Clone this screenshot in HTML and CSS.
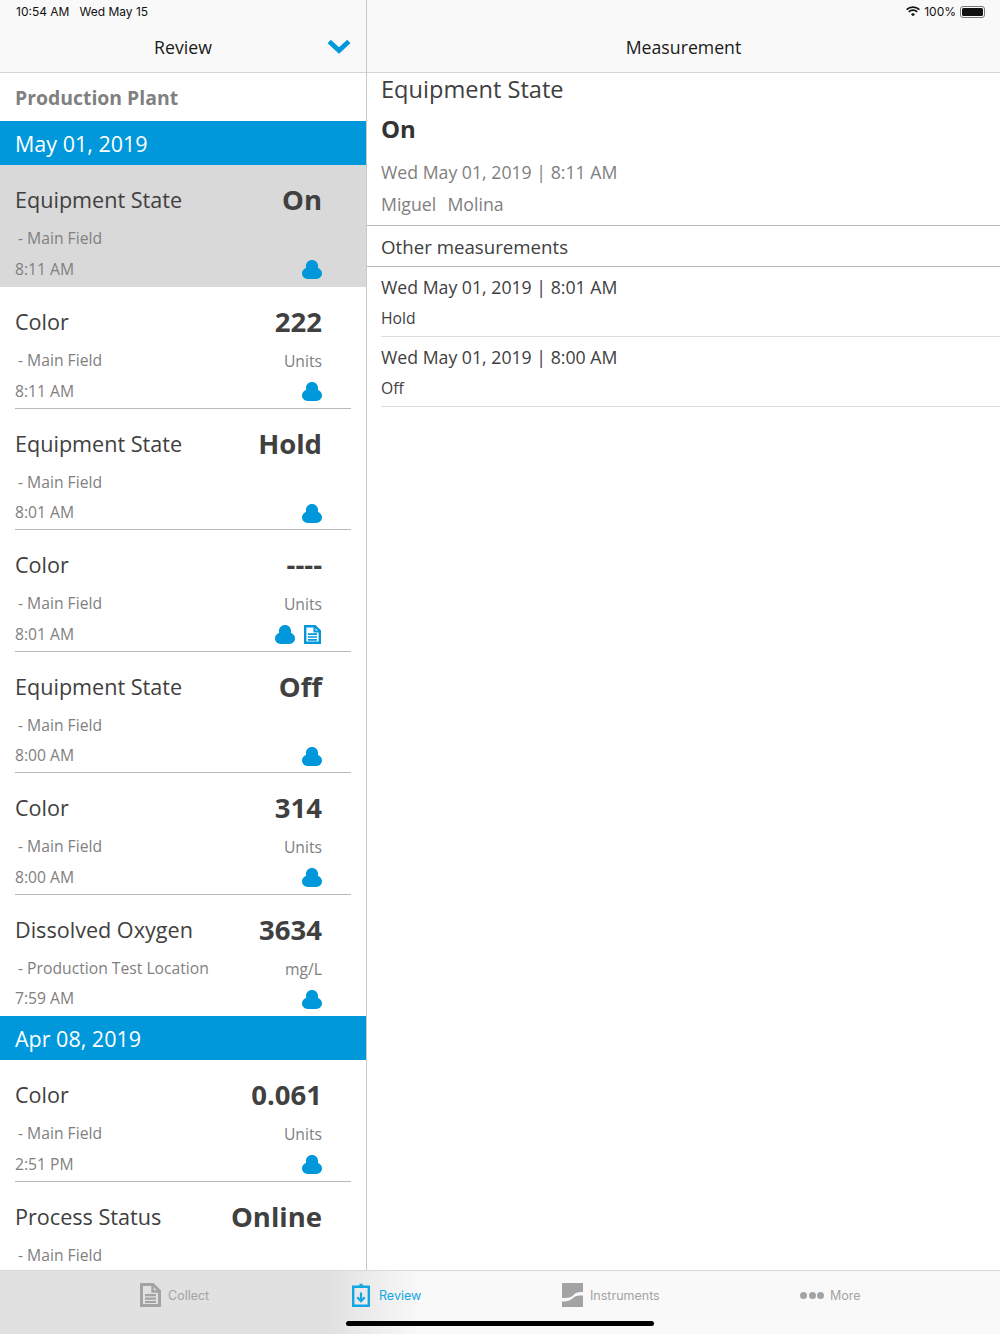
FILE: index.html
```html
<!DOCTYPE html>
<html lang="en">
<head>
<meta charset="utf-8">
<title>Review</title>
<link rel="stylesheet" href="styles.css">
</head>
<body>
<svg class="defs" width="0" height="0" aria-hidden="true">
  <symbol id="cloud" viewBox="0 0 20 19"><path d="M10 0c3.400 0 6.100 2.700 6.100 6.100 0 .7-.1 1.300-.3 1.700C18.300 8.700 20 10.800 20 13.300 20 16.500 17.500 19 14.300 19H5.700C2.500 19 0 16.500 0 13.300 0 10.800 1.700 8.700 4.200 7.800 4 7.400 3.900 6.800 3.900 6.100 3.900 2.700 6.600 0 10 0z"/></symbol>
  <symbol id="doc" viewBox="0 0 17 19"><path d="M1.200 1.200h9.800l4.800 4.800v11.800H1.200z" fill="none" stroke="currentColor" stroke-width="2.400"/><path d="M10.500 1v5.500H16" fill="none" stroke="currentColor" stroke-width="2"/><path d="M4 9.200h9M4 12h9M4 14.800h9" stroke="currentColor" stroke-width="1.700"/></symbol>
</svg>
<div class="app">
  <div class="panes">
    <section class="left">
      <header class="nav">
        <div class="status"><span>10:54 AM</span><span>Wed May 15</span></div>
        <div class="nav-title">Review
          <svg class="chevron" viewBox="0 0 24 15"><path d="M2.200 2.500 12 11.500 21.800 2.500" fill="none" stroke="#0098db" stroke-width="4.800"/></svg>
        </div>
      </header>
      <div class="list">
        <div class="plant">Production Plant</div>
        <div class="date">May 01, 2019</div>
        <article class="row selected">
          <div class="line1"><span class="name">Equipment State</span><span class="val">On</span></div>
          <div class="line2"><span class="loc">- Main Field</span></div>
          <div class="line3"><span class="time">8:11 AM</span><span class="icons"><svg class="cloud"><use href="#cloud"/></svg></span></div>
        </article>
        <article class="row">
          <div class="line1"><span class="name">Color</span><span class="val">222</span></div>
          <div class="line2"><span class="loc">- Main Field</span><span class="unit">Units</span></div>
          <div class="line3"><span class="time">8:11 AM</span><span class="icons"><svg class="cloud"><use href="#cloud"/></svg></span></div>
        </article>
        <article class="row">
          <div class="line1"><span class="name">Equipment State</span><span class="val">Hold</span></div>
          <div class="line2"><span class="loc">- Main Field</span></div>
          <div class="line3"><span class="time">8:01 AM</span><span class="icons"><svg class="cloud"><use href="#cloud"/></svg></span></div>
        </article>
        <article class="row">
          <div class="line1"><span class="name">Color</span><span class="val">----</span></div>
          <div class="line2"><span class="loc">- Main Field</span><span class="unit">Units</span></div>
          <div class="line3"><span class="time">8:01 AM</span><span class="icons"><svg class="cloud"><use href="#cloud"/></svg><svg class="doc"><use href="#doc"/></svg></span></div>
        </article>
        <article class="row">
          <div class="line1"><span class="name">Equipment State</span><span class="val">Off</span></div>
          <div class="line2"><span class="loc">- Main Field</span></div>
          <div class="line3"><span class="time">8:00 AM</span><span class="icons"><svg class="cloud"><use href="#cloud"/></svg></span></div>
        </article>
        <article class="row">
          <div class="line1"><span class="name">Color</span><span class="val">314</span></div>
          <div class="line2"><span class="loc">- Main Field</span><span class="unit">Units</span></div>
          <div class="line3"><span class="time">8:00 AM</span><span class="icons"><svg class="cloud"><use href="#cloud"/></svg></span></div>
        </article>
        <article class="row last">
          <div class="line1"><span class="name">Dissolved Oxygen</span><span class="val">3634</span></div>
          <div class="line2"><span class="loc">- Production Test Location</span><span class="unit">mg/L</span></div>
          <div class="line3"><span class="time">7:59 AM</span><span class="icons"><svg class="cloud"><use href="#cloud"/></svg></span></div>
        </article>
        <div class="date">Apr 08, 2019</div>
        <article class="row">
          <div class="line1"><span class="name">Color</span><span class="val">0.061</span></div>
          <div class="line2"><span class="loc">- Main Field</span><span class="unit">Units</span></div>
          <div class="line3"><span class="time">2:51 PM</span><span class="icons"><svg class="cloud"><use href="#cloud"/></svg></span></div>
        </article>
        <article class="row">
          <div class="line1"><span class="name">Process Status</span><span class="val">Online</span></div>
          <div class="line2"><span class="loc">- Main Field</span></div>
        </article>
      </div>
    </section>
    <section class="right">
      <header class="nav">
        <div class="status end">
          <svg class="wifi" viewBox="0 0 16 12"><path d="M8 11.500 5.700 9a3.300 3.300 0 0 1 4.600 0zM3.900 7.200 2.500 5.700a7.900 7.900 0 0 1 11 0l-1.400 1.500a5.900 5.900 0 0 0-8.200 0zM1.400 4.600 0 3.100a11.600 11.600 0 0 1 16 0l-1.400 1.500a9.600 9.600 0 0 0-13.200 0z"/></svg>
          <span>100%</span>
          <span class="battery"><span class="battery-fill"></span></span>
        </div>
        <div class="nav-title">Measurement</div>
      </header>
      <div class="detail">
        <h1 class="d-name">Equipment State</h1>
        <div class="d-val">On</div>
        <div class="d-meta">Wed May 01, 2019 | 8:11 AM</div>
        <div class="d-meta d-user">Miguel&nbsp; Molina</div>
      </div>
      <div class="other">Other measurements</div>
      <div class="m-item"><div class="m-date">Wed May 01, 2019 | 8:01 AM</div><div class="m-val">Hold</div></div>
      <div class="m-item"><div class="m-date">Wed May 01, 2019 | 8:00 AM</div><div class="m-val">Off</div></div>
    </section>
  </div>
  <footer class="tabs">
    <div class="tab t1">
      <svg class="t-icon" viewBox="0 0 21 24"><path d="M1.500 1.500h11.500l6.500 6.500v14.500H1.500z" fill="none" stroke="#a3a3a3" stroke-width="3"/><path d="M12.500 1.500v7h7" fill="none" stroke="#a3a3a3" stroke-width="2.400"/><path d="M5 12.200h11M5 15.600h11M5 19h11" stroke="#a3a3a3" stroke-width="2.200"/></svg>
      <span class="t-label">Collect</span>
    </div>
    <div class="tab t2 active">
      <svg class="t-icon" viewBox="0 0 18 24"><path d="M1.200 3.800h15.600v19H1.200z" fill="none" stroke="#14a5e3" stroke-width="2.400"/><path d="M5.500 5V2.800h2V.8h3v2h2V5z" fill="#14a5e3"/><path d="M9 9.500v8.500M5.200 14.300 9 18.200l3.800-3.900" fill="none" stroke="#14a5e3" stroke-width="2.200"/></svg>
      <span class="t-label">Review</span>
    </div>
    <div class="tab t3">
      <svg class="t-icon wide" viewBox="0 0 21 24"><path d="M0 0h21v9c-7 0-8 1.500-10 3.500S6 15 0 15zM0 18.500c7 0 8.500-1.500 11-3.500s4-2.500 10-2.500V24H0z" fill="#a3a3a3"/></svg>
      <span class="t-label">Instruments</span>
    </div>
    <div class="tab t4">
      <span class="dots"><i></i><i></i><i></i></span>
      <span class="t-label">More</span>
    </div>
    <div class="home"></div>
  </footer>
</div>
</body>
</html>
```
FILE: styles.css
```css
* { box-sizing: border-box; }
html, body { margin: 0; padding: 0; }
body { width: 1000px; height: 1334px; overflow: hidden; background: #fff; font-family: "Open Sans", "Noto Sans", sans-serif; color: #3c3c3c; }
.defs { position: absolute; }
.app { display: flex; flex-direction: column; height: 1334px; }
.panes { display: flex; height: 1270px; }
.left { width: 367px; border-right: 1px solid #c8c8c8; display: flex; flex-direction: column; overflow: hidden; flex: none; }
.right { flex: 1; min-width: 0; }
.nav { height: 73px; background: #f9f9f9; border-bottom: 1px solid #d4d4d4; display: flex; flex-direction: column; flex: none; }
.status { height: 24px; padding: 4px 0 0 16px; font: 12px/16px Inter, "Liberation Sans", sans-serif; color: #111; display: flex; gap: 10px; }
.status.end { justify-content: flex-end; padding: 4px 15px 0 0; gap: 4px; align-items: flex-start; }
.wifi { width: 14px; height: 11px; margin-top: 2px; fill: #111; }
.battery { width: 25px; height: 12px; margin-top: 2px; border: 1px solid #777; border-radius: 3px; padding: 1px; position: relative; display: block; }
.battery-fill { display: block; width: 100%; height: 100%; background: #111; border-radius: 1.500px; }
.nav-title { flex: 1; display: flex; align-items: center; justify-content: center; font-size: 17.700px; color: #1a1a1a; padding-bottom: 2px; position: relative; }
.chevron { position: absolute; right: 15px; top: 15px; width: 24px; height: 15px; }
.list { flex: 1; overflow: hidden; }
.plant { height: 48px; padding-left: 15px; font-size: 19.400px; font-weight: 700; line-height: 49px; color: #808080; }
.date { height: 44px; background: #0098db; color: #fff; font-size: 21.500px; line-height: 45px; padding-left: 15px; }
.row { height: 121.500px; padding: 0 15px; display: flex; flex-direction: column; position: relative; }
.row::after { content: ""; position: absolute; left: 15px; right: 15px; bottom: 0; height: 1px; background: #b9b9b9; }
.row.selected { background: #d9d9d9; height: 122px; }
.row.selected::after, .row.last::after { display: none; }
.line1 { height: 66px; padding: 4px 29px 0 0; display: flex; justify-content: space-between; align-items: center; margin-bottom: -8px; flex: none; }
.name { font-size: 21.600px; line-height: 40px; color: #404040; }
.val { font-size: 27.500px; font-weight: 700; line-height: 40px; color: #404040; }
.line2 { height: 30px; padding-right: 29px; display: flex; justify-content: space-between; align-items: center; flex: none; }
.loc { font-size: 15.700px; color: #808080; padding-left: 3px; }
.unit { font-size: 15.700px; color: #808080; position: relative; top: 1px; }
.line3 { height: 31px; display: flex; justify-content: space-between; align-items: center; padding-right: 29px; flex: none; }
.time { font-size: 15.700px; color: #808080; }
.icons { display: flex; gap: 9px; align-items: center; position: relative; top: 1px; }
.cloud { width: 20px; height: 19px; fill: #0098db; }
.doc { width: 17px; height: 19px; margin-right: 1px; color: #0098db; }
.detail { height: 153.500px; border-bottom: 1px solid #b9b9b9; padding-left: 14px; margin-top: -1px; }
.d-name { margin: 0; font-size: 23.600px; font-weight: 400; line-height: 34px; color: #404040; }
.d-val { font-size: 24px; font-weight: 700; line-height: 34px; margin-top: 6px; color: #333; }
.d-meta { font-size: 17.700px; color: #808080; line-height: 32px; margin-top: 10px; }
.d-user { margin-top: 0; word-spacing: 1px; }
.other { height: 41.500px; border-bottom: 1px solid #b9b9b9; padding-left: 14px; font-size: 18.700px; line-height: 42px; color: #404040; }
.m-item { height: 70px; margin-left: 14px; border-bottom: 1px solid #dedede; padding-top: 5px; }
.m-date { font-size: 17.700px; line-height: 30px; color: #404040; }
.m-val { font-size: 15.700px; line-height: 32px; color: #404040; }
.tabs { height: 64px; background: linear-gradient(90deg, #e1e1e1 0, #e1e1e1 330px, #f9f9f9 420px); border-top: 1px solid #d9d9d9; position: relative; font: 12.500px/1 Inter, "Liberation Sans", sans-serif; color: #a3a3a3; }
.tab { position: absolute; top: 12px; height: 24px; display: flex; align-items: center; gap: 7px; }
.t-label { padding-top: 2px; }
.t1 { left: 140px; }
.t2 { left: 352px; color: #14a5e3; gap: 9px; }
.t3 { left: 562px; }
.t4 { left: 800px; gap: 6px; }
.t-icon { width: 21px; height: 24px; }
.t2 .t-icon { width: 18px; }
.dots { display: flex; gap: 1.500px; }
.dots i { width: 7px; height: 7px; border-radius: 50%; background: #a3a3a3; display: block; }
.home { position: absolute; left: 346px; top: 50px; width: 308px; height: 5px; border-radius: 3px; background: #000; }
```
